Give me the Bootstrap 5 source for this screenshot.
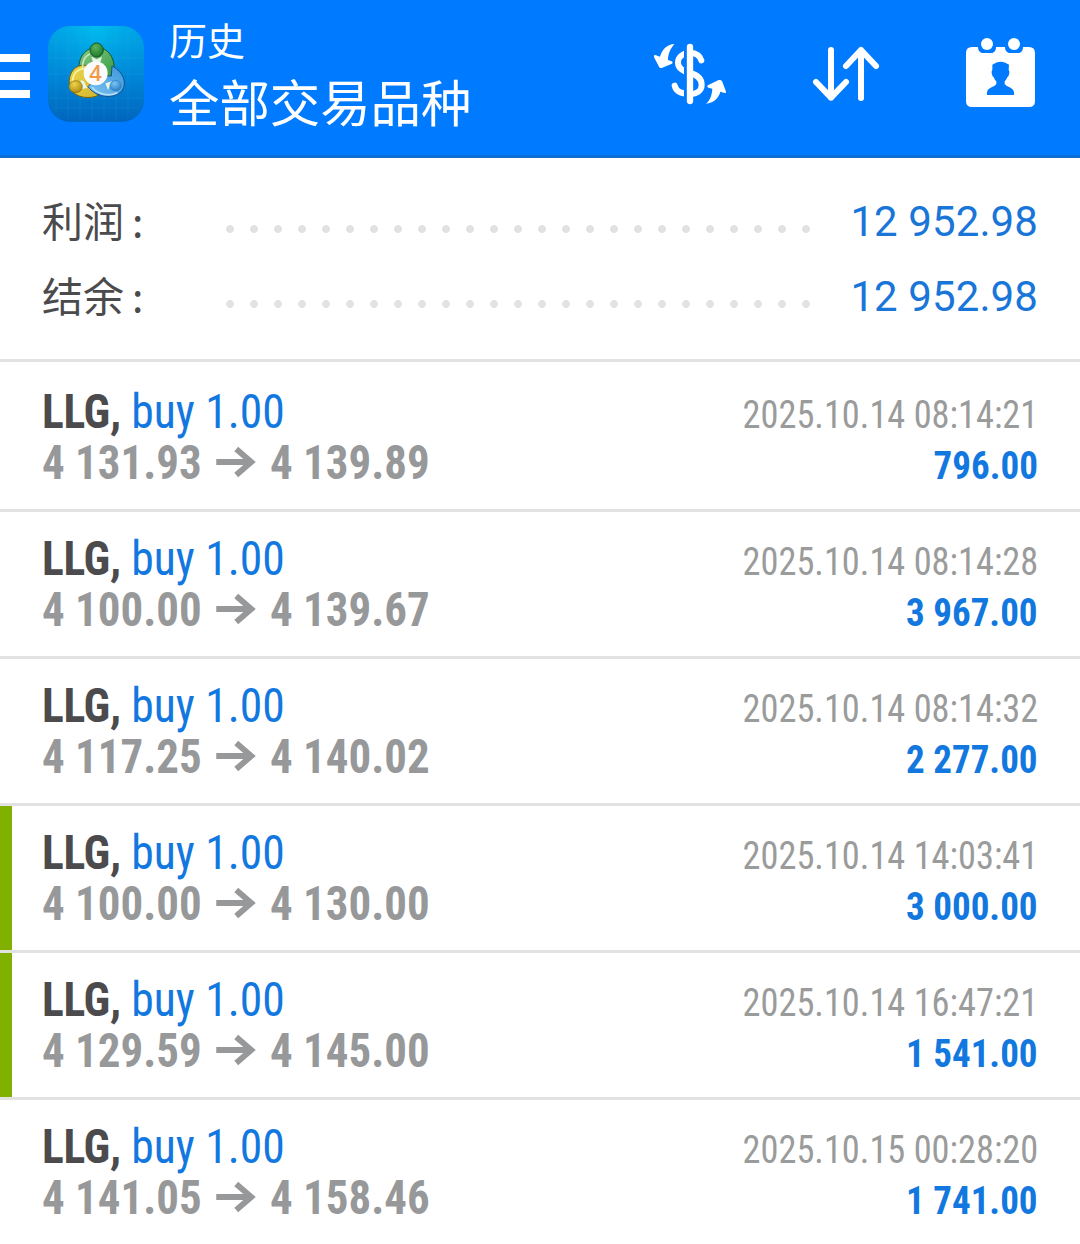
<!DOCTYPE html>
<html lang="zh-CN">
<head>
<meta charset="utf-8">
<meta name="viewport" content="width=device-width, initial-scale=1">
<title>历史</title>
<link href="https://cdn.jsdelivr.net/npm/bootstrap@5.3.0/dist/css/bootstrap.min.css" rel="stylesheet">
<style>
  body { font-family: Roboto, "Noto Sans CJK SC", sans-serif; background: #fff; overflow: hidden; color: #4b4b4d; }
  .topbar { height: 158px; background: #007aff; border-bottom: 3px solid #0d6fd6; color: #fff; }
  .menu-btn { width: 30px; height: 44px; margin-top: 54px; }
  .menu-btn i { display: block; height: 8px; background: #fff; }
  .app-logo { margin: 26px 0 0 18px; }
  .titles { margin: 14px 0 0 25px; font-family: "Noto Sans CJK SC", sans-serif; font-weight: 400; }
  .title-sub { font-size: 38px; line-height: 50px; }
  .title-main { font-size: 50.4px; line-height: 73px; }
  .tools { height: 120px; }
  .summary { height: 201px; padding: 26px 42px 0; }
  .sum-line { height: 75px; }
  .sum-label { font-family: "Noto Sans CJK SC", sans-serif; font-weight: 400; font-size: 41px; width: 184px; line-height: 71px; }
  .colon { margin-left: 8px; }
  .sum-value { font-size: 42px; line-height: 75px; color: #1976d8; letter-spacing: .1px; }
  .leader { height: 8px; width: 592px; margin-top: 41px;
    background: radial-gradient(circle at 4px 4px, #e2e2e2 3.6px, transparent 4.3px) 0 0 / 24px 8px repeat-x; }
  .deal { height: 147px; border-top: 3px solid #e2e2e2; padding: 21px 42px 0; position: relative; }
  .deal:first-child { height: 150px; padding-top: 24px; }
  .deal-line { height: 51px; line-height: 51px; font-size: 48px; white-space: nowrap; font-family: "Roboto Condensed", Roboto, sans-serif; font-stretch: 75%; }
  .deal-line > span { display: inline-block; transform-origin: 0 50%; transform: scaleX(.949); }
  .deal-tag::before { content: ""; position: absolute; left: 0; top: 0; bottom: 0; width: 12px; background: #80b000; }
  .sym { color: #4b4b4d; font-weight: 700; letter-spacing: -.3px; }
  .side { color: #1278e0; }
  .deal-line > .prices { color: #97989a; font-weight: 700; transform: scaleX(.936); }
  .deal-line > .stamp { color: #9a9b9b; font-size: 39px; transform-origin: 100% 50%; transform: scaleX(.932); }
  .deal-line > .gain { color: #1278e0; font-size: 39px; font-weight: 700; transform-origin: 100% 50%; transform: scaleX(.95); }
  .arrow { width: 43px; height: 32px; margin: -4px 15px 4px; }
</style>
<script src="https://cdn.jsdelivr.net/npm/bootstrap@5.3.0/dist/js/bootstrap.bundle.min.js"></script>
</head>
<body>
<svg width="0" height="0" class="d-none">
  <symbol id="arr" viewBox="0 0 40 32" preserveAspectRatio="none"><path d="M0 16H36M20 3L35 16L20 29" fill="none" stroke="currentColor" stroke-width="5.8"/></symbol>
</svg>

<header class="topbar d-flex align-items-start">
  <div class="menu-btn d-flex flex-column justify-content-between"><i></i><i></i><i></i></div>
  <svg class="app-logo" width="96" height="96" viewBox="0 0 288 288">
    <defs>
      <linearGradient id="bg" x1="0" y1="0" x2="0" y2="1"><stop offset="0" stop-color="#00a5e6"/><stop offset=".5" stop-color="#0088d8"/><stop offset="1" stop-color="#0065bd"/></linearGradient>
      <radialGradient id="glow" cx=".5" cy="0" r=".6"><stop offset="0" stop-color="#00c8f0" stop-opacity=".7"/><stop offset="1" stop-color="#00a0e0" stop-opacity="0"/></radialGradient>
      <linearGradient id="gr" x1="0" y1="0" x2="1" y2="1"><stop offset="0" stop-color="#8cc98a"/><stop offset="1" stop-color="#2f9a3c"/></linearGradient>
      <linearGradient id="ye" x1="0" y1="0" x2="1" y2="1"><stop offset="0" stop-color="#ecd94e"/><stop offset="1" stop-color="#d4b52c"/></linearGradient>
      <linearGradient id="bl" x1="1" y1="0" x2="0" y2="1"><stop offset="0" stop-color="#3c96dc"/><stop offset="1" stop-color="#7cc4f2"/></linearGradient>
      <radialGradient id="gb" cx=".4" cy=".3" r=".7"><stop offset="0" stop-color="#5fb45c"/><stop offset="1" stop-color="#1d7a2c"/></radialGradient>
      <radialGradient id="yb" cx=".4" cy=".3" r=".7"><stop offset="0" stop-color="#eed44a"/><stop offset="1" stop-color="#b08c12"/></radialGradient>
      <radialGradient id="bb" cx=".4" cy=".3" r=".7"><stop offset="0" stop-color="#7cc6f5"/><stop offset="1" stop-color="#2a7fc8"/></radialGradient>
    </defs>
    <rect width="288" height="288" rx="66" fill="url(#bg)"/>
    <rect width="288" height="288" rx="66" fill="url(#glow)"/>
    <path d="M24 30V258M60 8V280M96 3V285M132 3V285M168 3V285M204 3V285M240 12V276M8 48H280M3 96H285M3 144H285M3 216H285M12 246H276" stroke="#4cc4ee" stroke-opacity=".16" stroke-width="2"/>
    <g stroke-linejoin="round" stroke-width="3">
      <path d="M96 140C84 94 116 64 146 64C178 64 208 96 196 150L170 160L116 146Z" fill="url(#gr)" stroke="#145a2c"/>
      <path d="M113 118C82 114 60 140 64 176C70 210 110 222 148 210L150 160L120 132Z" fill="url(#ye)" stroke="#75600c"/>
      <path d="M192 120C228 138 240 176 218 198C190 222 142 212 120 182L150 150L190 150Z" fill="url(#bl)" stroke="#124f8c"/>
      <path d="M74 172C72 142 92 126 112 128" fill="none" stroke="#fbf2a0" stroke-width="5"/>
      <path d="M104 126C102 96 120 86 126 84" fill="none" stroke="#c5e8c0" stroke-width="5"/>
      <path d="M132 184C150 206 184 212 208 200" fill="none" stroke="#b5e0fa" stroke-width="5"/>
      <path d="M130 92L146 100L162 92L156 112H136ZM98 162L98 190L118 186L108 166ZM172 172L180 192L192 166Z" fill="#e8f4e6" stroke="none"/>
      <ellipse cx="146" cy="72" rx="20" ry="21" fill="url(#gb)" stroke="#145a2c"/>
      <ellipse cx="83" cy="182" rx="20" ry="18" fill="url(#yb)" stroke="#8a6c0e" stroke-width="2"/>
      <ellipse cx="203" cy="179" rx="17" ry="16" fill="url(#bb)" stroke="#2f80c4" stroke-width="2"/>
    </g>
    <circle cx="143" cy="142" r="36" fill="#fbfbfb"/>
    <text x="143" y="166" text-anchor="middle" font-family="Open Sans" font-size="66" font-weight="600" fill="#f29a4a">4</text>
  </svg>
  <div class="titles">
    <div class="title-sub">历史</div>
    <div class="title-main">全部交易品种</div>
  </div>
  <div class="tools ms-auto d-flex align-items-start">
    <svg width="160" height="120" viewBox="0 0 480 360">
      <g transform="translate(0 75)">
        <path d="M184 106C180 92 168 84 150 84C128 84 114 96 114 113C114 132 132 139 150 144C170 149 185 158 185 180C185 197 170 207 150 207C125 207 108 200 104 182" fill="none" stroke="#fff" stroke-width="18" stroke-linecap="round"/>
        <path d="M132 62H141V232H132Z" fill="#007aff"/>
        <path d="M150 66V228" stroke="#fff" stroke-width="19" stroke-linecap="round"/>
        <path d="M103 57C84 57 66 72 60 95L46 90C41 89 41 94 43 98L57 125C59 129 63 130 67 128L96 116C99 114 98 110 95 109L84 105C84 86 92 70 103 57Z" fill="#fff"/>
        <path d="M198 236C220 234 236 220 241 200L254 204C258 205 259 201 257 197L247 170C245 165 240 164 236 165L205 180C201 182 201 186 205 188L217 191C216 210 210 226 198 236Z" fill="#fff"/>
      </g>
    </svg>
    <svg width="280" height="120" viewBox="0 0 840 360">
      <g transform="translate(0 90)">
        <path d="M93 60V203M48 156L93 203L138 156M183 204V60M138 108L183 60L228 108" fill="none" stroke="#fff" stroke-width="18" stroke-linecap="round" stroke-linejoin="round"/>
        <path d="M516 51H534C534 62 540 69 549 69H574C583 69 588 62 588 51H615C615 62 621 69 630 69H655C664 69 669 62 669 51H687Q705 51 705 69V213Q705 231 687 231H516Q498 231 498 213V69Q498 51 516 51Z" fill="#fff"/>
        <circle cx="561" cy="42" r="18" fill="#fff"/><circle cx="642" cy="42" r="18" fill="#fff"/>
        <path d="M577 104L588 98Q602 92 616 98L627 104L626 120Q629 122 628 130Q627 138 622 142Q619 150 614 154V162C620 172 642 172 642 188V195H561V188C561 172 584 172 589 162V154Q584 150 581 142Q576 138 575 130Q574 122 577 120Z" fill="#007aff"/>
      </g>
    </svg>
  </div>
</header>

<main>
  <section class="summary">
    <div class="sum-line d-flex"><span class="sum-label">利润<span class="colon">:</span></span><span class="leader"></span><span class="sum-value ms-auto">12 952.98</span></div>
    <div class="sum-line d-flex"><span class="sum-label">结余<span class="colon">:</span></span><span class="leader"></span><span class="sum-value ms-auto">12 952.98</span></div>
  </section>

  <section>
    <article class="deal">
      <div class="deal-line d-flex justify-content-between align-items-baseline"><span><span class="sym">LLG,</span> <span class="side">buy 1.00</span></span><span class="stamp">2025.10.14 08:14:21</span></div>
      <div class="deal-line d-flex justify-content-between align-items-baseline"><span class="prices">4 131.93<svg class="arrow"><use href="#arr"/></svg>4 139.89</span><span class="gain">796.00</span></div>
    </article>
    <article class="deal">
      <div class="deal-line d-flex justify-content-between align-items-baseline"><span><span class="sym">LLG,</span> <span class="side">buy 1.00</span></span><span class="stamp">2025.10.14 08:14:28</span></div>
      <div class="deal-line d-flex justify-content-between align-items-baseline"><span class="prices">4 100.00<svg class="arrow"><use href="#arr"/></svg>4 139.67</span><span class="gain">3 967.00</span></div>
    </article>
    <article class="deal">
      <div class="deal-line d-flex justify-content-between align-items-baseline"><span><span class="sym">LLG,</span> <span class="side">buy 1.00</span></span><span class="stamp">2025.10.14 08:14:32</span></div>
      <div class="deal-line d-flex justify-content-between align-items-baseline"><span class="prices">4 117.25<svg class="arrow"><use href="#arr"/></svg>4 140.02</span><span class="gain">2 277.00</span></div>
    </article>
    <article class="deal deal-tag">
      <div class="deal-line d-flex justify-content-between align-items-baseline"><span><span class="sym">LLG,</span> <span class="side">buy 1.00</span></span><span class="stamp">2025.10.14 14:03:41</span></div>
      <div class="deal-line d-flex justify-content-between align-items-baseline"><span class="prices">4 100.00<svg class="arrow"><use href="#arr"/></svg>4 130.00</span><span class="gain">3 000.00</span></div>
    </article>
    <article class="deal deal-tag">
      <div class="deal-line d-flex justify-content-between align-items-baseline"><span><span class="sym">LLG,</span> <span class="side">buy 1.00</span></span><span class="stamp">2025.10.14 16:47:21</span></div>
      <div class="deal-line d-flex justify-content-between align-items-baseline"><span class="prices">4 129.59<svg class="arrow"><use href="#arr"/></svg>4 145.00</span><span class="gain">1 541.00</span></div>
    </article>
    <article class="deal">
      <div class="deal-line d-flex justify-content-between align-items-baseline"><span><span class="sym">LLG,</span> <span class="side">buy 1.00</span></span><span class="stamp">2025.10.15 00:28:20</span></div>
      <div class="deal-line d-flex justify-content-between align-items-baseline"><span class="prices">4 141.05<svg class="arrow"><use href="#arr"/></svg>4 158.46</span><span class="gain">1 741.00</span></div>
    </article>
  </section>
</main>
</body>
</html>
